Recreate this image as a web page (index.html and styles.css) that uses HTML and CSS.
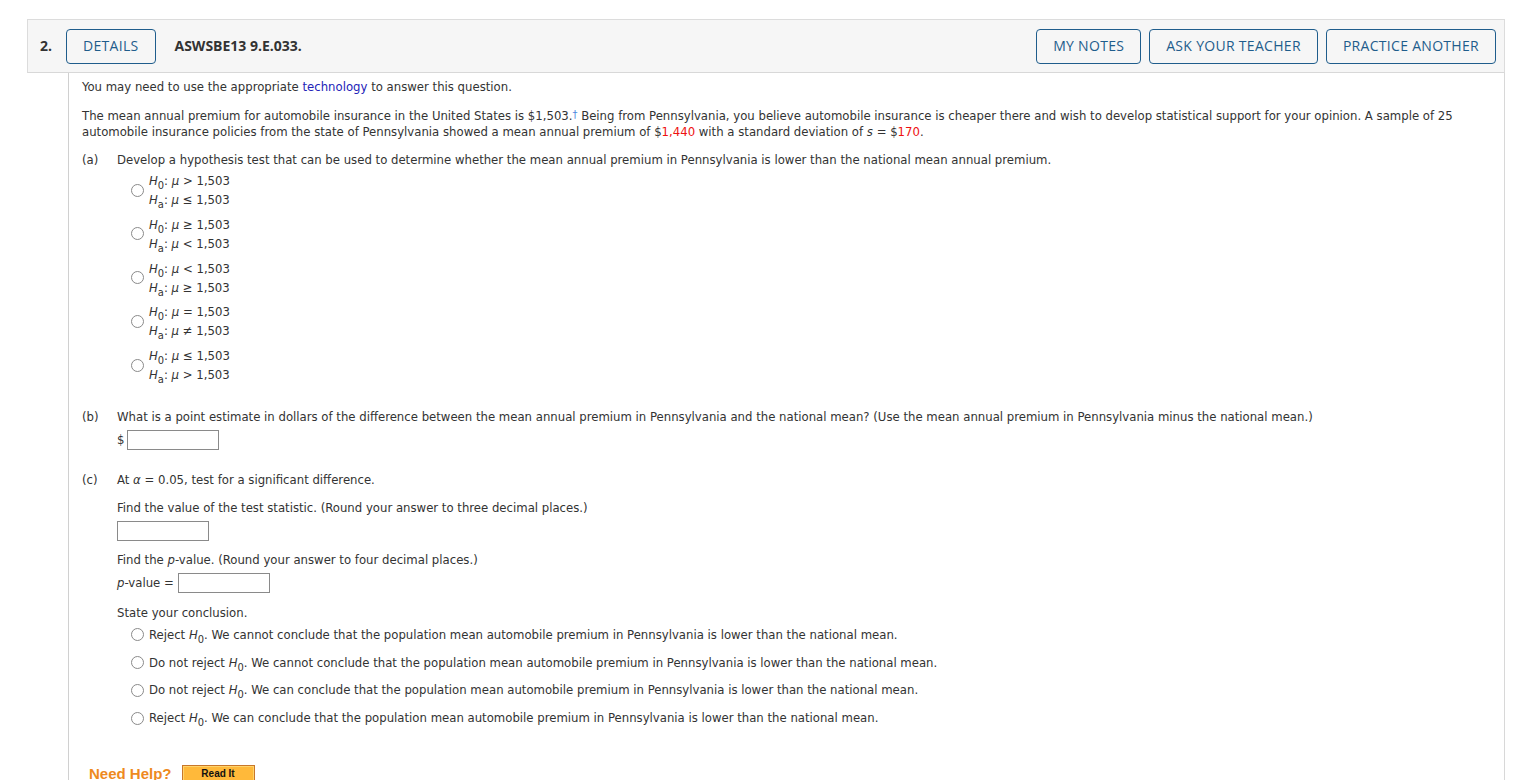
FILE: index.html
```html
<!DOCTYPE html>
<html>
<head>
<meta charset="utf-8">
<link rel="stylesheet" href="styles.css">
</head>
<body>
<div class="page">
  <div class="qhead">
    <span class="qnum">2.</span>
    <button class="hbtn">DETAILS</button>
    <span class="qcode">ASWSBE13 9.E.033.</span>
    <div class="hright">
      <button class="hbtn">MY NOTES</button>
      <button class="hbtn">ASK YOUR TEACHER</button>
      <button class="hbtn">PRACTICE ANOTHER</button>
    </div>
  </div>
  <div class="qbody">
    <p class="p1">You may need to use the appropriate <span class="link">technology</span> to answer this question.</p>
    <p class="p2">The mean annual premium for automobile insurance in the United States is $1,503.<span class="dag">†</span> Being from Pennsylvania, you believe automobile insurance is cheaper there and wish to develop statistical support for your opinion. A sample of 25 automobile insurance policies from the state of Pennsylvania showed a mean annual premium of $<span class="red">1,440</span> with a standard deviation of <i>s</i> = $<span class="red">170</span>.</p>

    <div class="part pa">
      <span class="plabel">(a)</span>
      <div class="pcontent">
        <div class="line">Develop a hypothesis test that can be used to determine whether the mean annual premium in Pennsylvania is lower than the national mean annual premium.</div>
        <div class="hyps">
          <div class="hyp"><span class="radio"></span><div class="hl"><div><i>H</i><sub>0</sub>: <i>μ</i> &gt; 1,503</div><div><i>H</i><sub>a</sub>: <i>μ</i> ≤ 1,503</div></div></div>
          <div class="hyp"><span class="radio"></span><div class="hl"><div><i>H</i><sub>0</sub>: <i>μ</i> ≥ 1,503</div><div><i>H</i><sub>a</sub>: <i>μ</i> &lt; 1,503</div></div></div>
          <div class="hyp"><span class="radio"></span><div class="hl"><div><i>H</i><sub>0</sub>: <i>μ</i> &lt; 1,503</div><div><i>H</i><sub>a</sub>: <i>μ</i> ≥ 1,503</div></div></div>
          <div class="hyp"><span class="radio"></span><div class="hl"><div><i>H</i><sub>0</sub>: <i>μ</i> = 1,503</div><div><i>H</i><sub>a</sub>: <i>μ</i> ≠ 1,503</div></div></div>
          <div class="hyp"><span class="radio"></span><div class="hl"><div><i>H</i><sub>0</sub>: <i>μ</i> ≤ 1,503</div><div><i>H</i><sub>a</sub>: <i>μ</i> &gt; 1,503</div></div></div>
        </div>
      </div>
    </div>

    <div class="part pb">
      <span class="plabel">(b)</span>
      <div class="pcontent">
        <div class="line">What is a point estimate in dollars of the difference between the mean annual premium in Pennsylvania and the national mean? (Use the mean annual premium in Pennsylvania minus the national mean.)</div>
        <div class="inrow dollar"><span>$</span><span class="box"></span></div>
      </div>
    </div>

    <div class="part pc">
      <span class="plabel">(c)</span>
      <div class="pcontent">
        <div class="line">At <i>α</i> = 0.05, test for a significant difference.</div>
        <div class="line sp">Find the value of the test statistic. (Round your answer to three decimal places.)</div>
        <div class="inrow"><span class="box"></span></div>
        <div class="line sp2">Find the <i>p</i>-value. (Round your answer to four decimal places.)</div>
        <div class="inrow pv"><span><i>p</i>-value =</span><span class="box"></span></div>
        <div class="line sp3">State your conclusion.</div>
        <div class="concl">
          <div class="copt"><span class="radio"></span><span>Reject <i>H</i><sub>0</sub>. We cannot conclude that the population mean automobile premium in Pennsylvania is lower than the national mean.</span></div>
          <div class="copt"><span class="radio"></span><span>Do not reject <i>H</i><sub>0</sub>. We cannot conclude that the population mean automobile premium in Pennsylvania is lower than the national mean.</span></div>
          <div class="copt"><span class="radio"></span><span>Do not reject <i>H</i><sub>0</sub>. We can conclude that the population mean automobile premium in Pennsylvania is lower than the national mean.</span></div>
          <div class="copt"><span class="radio"></span><span>Reject <i>H</i><sub>0</sub>. We can conclude that the population mean automobile premium in Pennsylvania is lower than the national mean.</span></div>
        </div>
      </div>
    </div>

    <div class="help">
      <span class="needhelp">Need Help?</span>
      <button class="readit">Read It</button>
    </div>
  </div>
</div>
</body>
</html>
```

FILE: styles.css
```css
html, body {
  margin: 0;
  padding: 0;
  background: #fff;
}
.page {
  padding: 19px 8px 0 27px;
  font-family: "DejaVu Sans", sans-serif;
  font-stretch: condensed;
  font-size: 13px;
  color: #333;
  line-height: 16px;
}
.qhead {
  display: flex;
  align-items: center;
  height: 52px;
  background: #f6f6f6;
  border: 1px solid #dcdcdc;
  border-bottom: 1px solid #d8d8d8;
  padding: 0 8px 0 12px;
  font-family: "Open Sans", sans-serif;
  font-stretch: normal;
}
.qnum {
  font-weight: 700;
  font-size: 14px;
  color: #333;
  width: 26px;
}
.hbtn {
  font-family: "Open Sans", sans-serif;
  font-size: 14px;
  font-weight: 500;
  color: #1f5d8c;
  background: #f6f6f6;
  border: 1px solid #1f5d8c;
  border-radius: 4px;
  height: 35px;
  padding: 0 16px 1px;
  letter-spacing: 0.3px;
  cursor: pointer;
}
.qcode {
  font-weight: 700;
  font-size: 14px;
  color: #333;
  margin-left: 19px;
}
.hright {
  margin-left: auto;
  display: flex;
  gap: 8px;
}
.qbody {
  margin-left: 41px;
  border-left: 1px solid #d0d0d0;
  border-right: 1px solid #d8d8d8;
  padding: 6px 0 0 13px;
  height: 720px;
}
p {
  margin: 0;
}
.p2 {
  margin-top: 12px;
  padding-right: 30px;
}
.link { color: #2323b8; }
.dag { color: #4a86e0; font-size: 11px; vertical-align: 2px; }
.red { color: #ee1111; }
.part {
  display: flex;
  margin-top: 12px;
}
.plabel {
  width: 35px;
  flex: none;
}
.pcontent {
  flex: 1;
}
.hyps {
  margin-top: 3px;
  margin-left: 14px;
}
.hyp {
  display: flex;
  align-items: center;
  margin-bottom: 5.8px;
}
.hl div {
  line-height: 19px;
  height: 19px;
}
sub {
  font-size: 11px;
  vertical-align: -4px;
  line-height: 0;
}
.radio {
  display: inline-block;
  width: 11px;
  height: 11px;
  border: 1px solid #8a8a8a;
  border-radius: 50%;
  background: #fff;
  margin-right: 5px;
  flex: none;
}
.pb {
  margin-top: 19px;
}
.inrow {
  display: flex;
  align-items: center;
  height: 20px;
  margin-top: 5px;
}
.dollar { gap: 3px; }
.box {
  display: inline-block;
  width: 90px;
  height: 18px;
  border: 1px solid #8a8a8a;
  background: #fff;
}
.pv { gap: 4px; }
.pc {
  margin-top: 22px;
}
.sp { margin-top: 12px; }
.sp2 { margin-top: 11px; }
.sp3 { margin-top: 12px; }
.concl {
  margin-left: 14px;
  margin-top: 6px;
}
.copt {
  display: flex;
  align-items: center;
  height: 16px;
  margin-bottom: 11.7px;
  white-space: nowrap;
}
.help {
  display: flex;
  align-items: center;
  margin-top: 27px;
  margin-left: 7px;
  gap: 10px;
}
.needhelp {
  font-family: "Liberation Sans", Arial, sans-serif;
  font-stretch: normal;
  font-weight: 700;
  font-size: 15px;
  color: #ee8a1e;
}
.readit {
  font-family: "Liberation Sans", Arial, sans-serif;
  font-weight: 700;
  font-size: 10px;
  color: #111;
  background: #ffb93a;
  border: 1px solid #c8772a;
  box-shadow: inset 0 0 0 1px #ffd36b;
  width: 73px;
  height: 18px;
  padding: 0;
}
```
